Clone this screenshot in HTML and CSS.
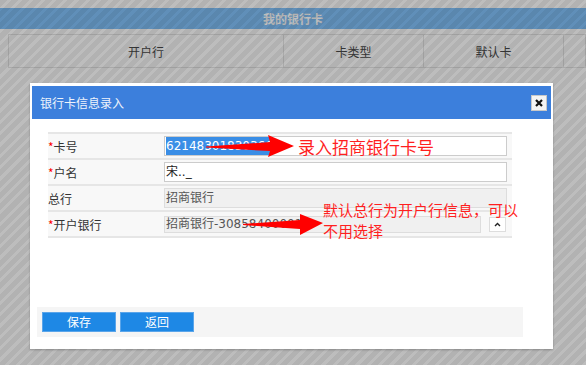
FILE: index.html
```html
<!DOCTYPE html>
<html lang="zh-CN">
<head>
  <meta charset="UTF-8">
  <title>我的银行卡</title>
  <link rel="stylesheet" href="styles.css">
</head>
<body>
<div class="page">
  <div class="page-title">我的银行卡</div>
  <table class="card-list">
    <tr>
      <th class="col-bank">开户行</th>
      <th class="col-type">卡类型</th>
      <th class="col-default">默认卡</th>
      <th class="col-more"></th>
    </tr>
  </table>
</div>

<div class="mask"></div>

<div class="dialog">
  <div class="dialog-head">
    <span>银行卡信息录入</span>
    <a href="#" class="dialog-close">
      <svg width="8" height="8" viewBox="0 0 8 8"><path d="M1 1L7 7M7 1L1 7" stroke="#111" stroke-width="2.2"/></svg>
    </a>
  </div>
  <div class="dialog-body">
    <table class="form">
      <tr>
        <td class="label"><span class="star">*</span>卡号</td>
        <td><div class="input"><span class="sel">62148301830366</span></div></td>
      </tr>
      <tr>
        <td class="label"><span class="star">*</span>户名</td>
        <td><div class="input">宋.._</div></td>
      </tr>
      <tr>
        <td class="label">总行</td>
        <td><div class="input disabled">招商银行</div></td>
      </tr>
      <tr>
        <td class="label"><span class="star">*</span>开户银行</td>
        <td>
          <div class="select-row">
            <div class="input select">招商银行-30858400001</div>
            <a href="#" class="select-btn">
              <svg width="7" height="5" viewBox="0 0 7 5"><path d="M1 4L3.5 1.5L6 4" stroke="#222" stroke-width="1.4" fill="none"/></svg>
            </a>
          </div>
        </td>
      </tr>
    </table>
  </div>
  <div class="dialog-foot">
    <a href="#" class="btn">保存</a>
    <a href="#" class="btn">返回</a>
  </div>
</div>

<svg class="marks" width="586" height="365" viewBox="0 0 586 365">
  <polygon points="206,146.5 270,142 268,135 294,146 268,157 270,151 206,147.5" fill="#ff0000"/>
  <polygon points="243,224 300,220 300,214 323,223 300,235 300,229 243,225" fill="#ff0000"/>
</svg>
<div class="note note-card">录入招商银行卡号</div>
<div class="note note-bank">默认总行为开户行信息，可以<br>不用选择</div>
</body>
</html>
```

FILE: styles.css
```css
body {
  margin: 0;
  width: 586px;
  height: 365px;
  overflow: hidden;
  position: relative;
  background: #fff;
  font-family: "Noto Sans CJK SC", sans-serif;
  font-size: 12px;
  color: #333;
}

a {
  text-decoration: none;
}

.page {
  padding-top: 8px;
}

.page-title {
  height: 21px;
  line-height: 21px;
  background: #81c1f9;
  color: #fff;
  font-weight: bold;
  text-align: center;
}

.card-list {
  width: 578px;
  margin: 5px 0 0 8px;
  border-collapse: collapse;
  table-layout: fixed;
}

.card-list th {
  height: 32px;
  padding: 0;
  border: 1px solid #e4e4e4;
  font-weight: normal;
  color: #4a4a4a;
}

.card-list .col-bank {
  width: 274px;
}

.card-list .col-type,
.card-list .col-default {
  width: 139px;
}

.mask {
  position: absolute;
  top: 0;
  left: 0;
  right: 0;
  bottom: 0;
  background: repeating-linear-gradient(135deg, rgba(0, 0, 0, .3) 0 5px, rgba(0, 0, 0, .26) 5px 8px);
}

.dialog {
  position: absolute;
  left: 30px;
  top: 83px;
  width: 523px;
  height: 266px;
  box-sizing: border-box;
  padding: 3px 2px 12px;
  background: #fff;
  box-shadow: 0 1px 2px rgba(0, 0, 0, .25);
}

.dialog-head {
  height: 33px;
  padding: 0 4px 0 8px;
  display: flex;
  align-items: center;
  justify-content: space-between;
  background: #3c7fdc;
  color: #eef3fb;
}

.dialog-close {
  width: 16px;
  height: 16px;
  box-sizing: border-box;
  border: 1px solid #c8c8c8;
  background: #f4f4f4;
  display: flex;
  align-items: center;
  justify-content: center;
}

.dialog-body {
  height: 188px;
  box-sizing: border-box;
  padding: 13px 0 0 16px;
}

.form {
  width: 464px;
  border-collapse: collapse;
  border-top: 2px solid #e6e6e6;
  background: #f8f8f8;
}

.form td {
  height: 24px;
  padding: 0;
  border-bottom: 2px solid #e6e6e6;
}

.form .label {
  width: 116px;
  color: #333;
}

.star {
  color: #f00;
}

.input {
  width: 343px;
  height: 20px;
  box-sizing: border-box;
  padding-left: 1px;
  border: 1px solid #ccc;
  background: #fff;
  line-height: 18px;
  font-family: "DejaVu Sans", "Noto Sans CJK SC", sans-serif;
  font-size: 12px;
  color: #222;
  white-space: nowrap;
  overflow: hidden;
}

.sel {
  display: inline-block;
  background: #3a8ee6;
  color: #fff;
}

.input.disabled {
  background: #f0f0f0;
  border-color: #ddd;
  color: #555;
}

.select-row {
  display: flex;
  align-items: center;
}

.input.select {
  width: 317px;
  height: 17px;
  line-height: 15px;
  background: #f0f0f0;
  border-color: #ddd;
  color: #555;
}

.select-btn {
  width: 17px;
  height: 15px;
  margin-left: 8px;
  box-sizing: border-box;
  border: 1px solid #ddd;
  background: #fff;
  display: flex;
  align-items: center;
  justify-content: center;
}

.dialog-foot {
  width: 486px;
  height: 30px;
  margin-left: 5px;
  box-sizing: border-box;
  padding: 5px;
  display: flex;
  gap: 4px;
  background: #f5f5f5;
}

.btn {
  width: 74px;
  height: 20px;
  box-sizing: border-box;
  border: 1px solid #5aa5ea;
  background: #1e88e5;
  color: #fff;
  line-height: 18px;
  text-align: center;
}

.marks {
  position: absolute;
  top: 0;
  left: 0;
}

.note {
  position: absolute;
  color: #ff1f1f;
  white-space: nowrap;
}

.note-card {
  left: 298px;
  top: 135px;
  font-size: 17px;
  line-height: 24px;
}

.note-bank {
  left: 323px;
  top: 199px;
  font-size: 15px;
  line-height: 21px;
}
```
